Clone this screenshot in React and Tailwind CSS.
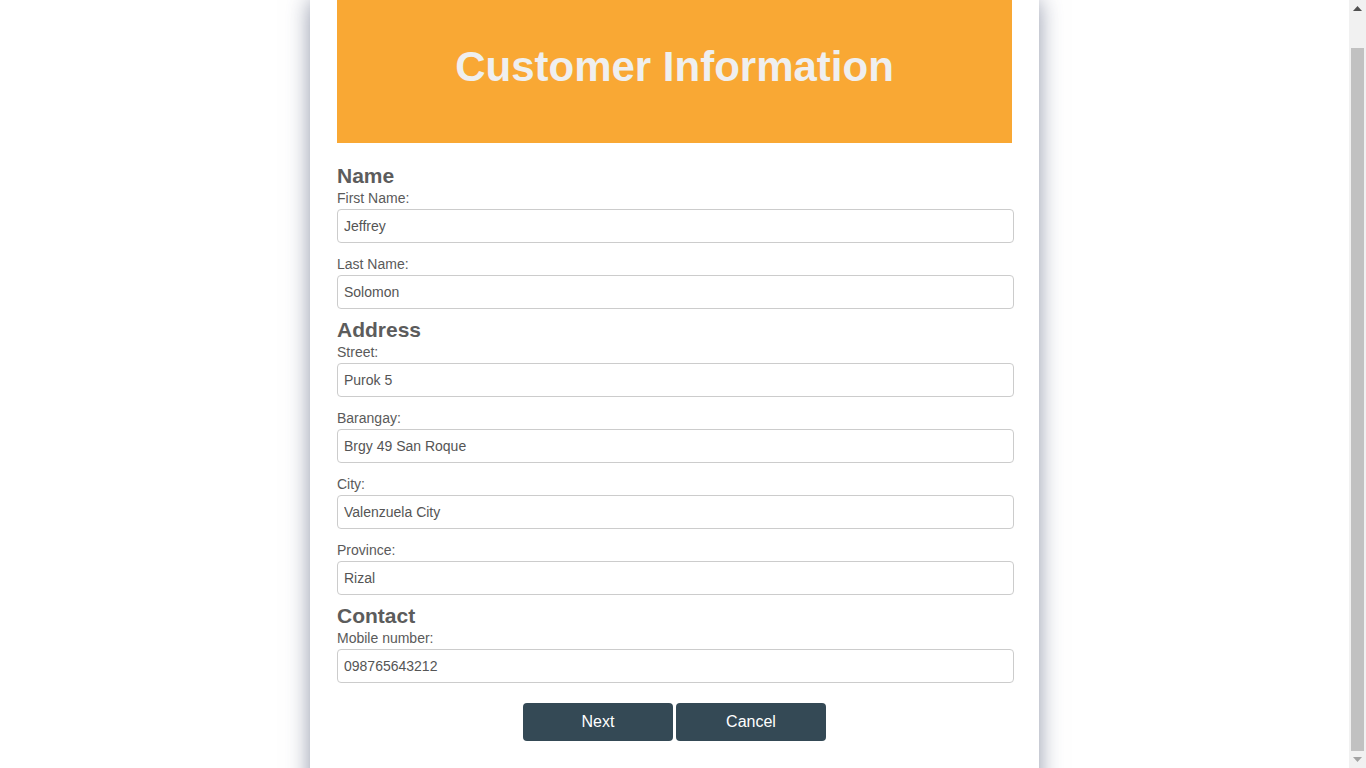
export default function App() {
  const sections = [
    {
      title: "Name",
      fields: [
        { label: "First Name:", value: "Jeffrey" },
        { label: "Last Name:", value: "Solomon" },
      ],
    },
    {
      title: "Address",
      fields: [
        { label: "Street:", value: "Purok 5" },
        { label: "Barangay:", value: "Brgy 49 San Roque" },
        { label: "City:", value: "Valenzuela City" },
        { label: "Province:", value: "Rizal" },
      ],
    },
    {
      title: "Contact",
      fields: [{ label: "Mobile number:", value: "098765643212" }],
    },
  ];

  return (
    <div className="flex bg-white font-['Liberation_Sans',Arial,sans-serif]">
      <div className="flex-1 min-h-[802px]">
        <div className="mx-auto w-[729px] min-h-[802px] bg-white px-[27px] shadow-[0_0_22px_rgba(55,65,100,0.55)]">
          <header className="h-[143px] bg-[#f9a834] flex items-center justify-center">
            <h1 className="text-[42px] font-bold text-[#efefef] leading-none mt-[-10px]">
              Customer Information
            </h1>
          </header>

          <form className="pt-[22px]" onSubmit={(e) => e.preventDefault()}>
            {sections.map((s) => (
              <div key={s.title} className="mb-[10px]">
                <h2 className="text-[21px] leading-[22px] font-bold text-[#5c5c5c] mb-[3px]">{s.title}</h2>
                <div className="flex flex-col gap-[13px]">
                  {s.fields.map((f) => (
                    <div key={f.label}>
                      <label className="block text-[14px] leading-[16px] text-[#5a5a5a] mb-[3px]">{f.label}</label>
                      <input
                        defaultValue={f.value}
                        className="block w-[677px] h-[34px] px-[6px] text-[14px] text-[#555] border border-[#ccc] rounded-[4px] outline-none"
                      />
                    </div>
                  ))}
                </div>
              </div>
            ))}

            <div className="flex justify-center gap-[3px] pt-[10px]">
              <button type="submit" className="w-[150px] h-[38px] rounded-[4px] bg-[#344955] text-white text-[16px]">
                Next
              </button>
              <button type="button" className="w-[150px] h-[38px] rounded-[4px] bg-[#344955] text-white text-[16px]">
                Cancel
              </button>
            </div>
          </form>
        </div>
      </div>

      {/* page scrollbar */}
      <div className="sticky top-0 h-screen w-[17px] bg-[#f1f1f1] flex flex-col items-center">
        <div className="h-[17px] flex items-center justify-center">
          <svg width="9" height="5" viewBox="0 0 9 5"><path d="M4.5 0 L9 5 L0 5 Z" fill="#505050" /></svg>
        </div>
        <div className="h-[31px]" />
        <div className="w-[13px] flex-1 bg-[#c1c1c1]" />
        <div className="h-[17px] flex items-center justify-center">
          <svg width="9" height="5" viewBox="0 0 9 5"><path d="M0 0 L9 0 L4.5 5 Z" fill="#a3a3a3" /></svg>
        </div>
      </div>
    </div>
  );
}
